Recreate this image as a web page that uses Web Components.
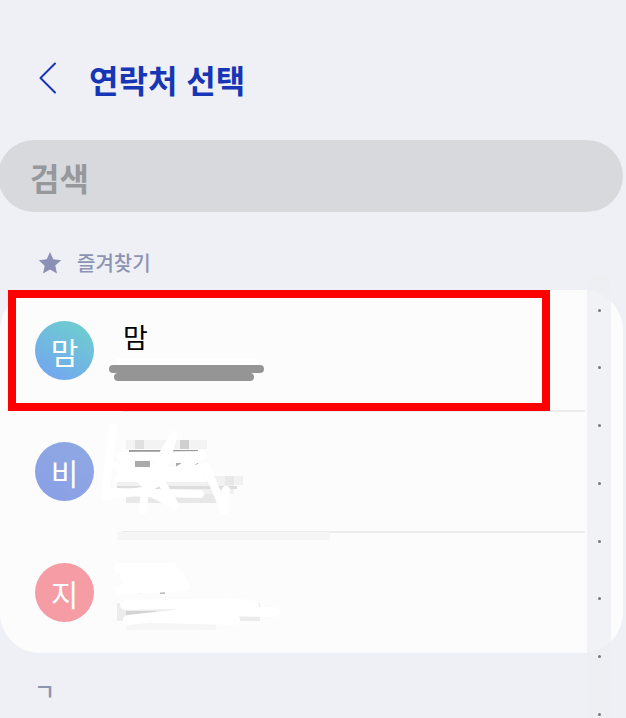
<!DOCTYPE html>
<html lang="ko">
<head>
<meta charset="utf-8">
<title>연락처 선택</title>
<style>
  html, body { margin: 0; padding: 0; height: 718px; overflow: hidden; background: #eff0f6; }
  body { font-family: "Noto Sans CJK KR", "Noto Sans", sans-serif; }
</style>
</head>
<body>
<picker-page>
  <picker-header>연락처 선택</picker-header>
  <search-pill>검색</search-pill>
  <group-label star>즐겨찾기</group-label>
  <contact-card>
    <contact-row initial="맘" tone="blue" name="맘"></contact-row>
    <contact-row initial="비" tone="violet" divider></contact-row>
    <contact-row initial="지" tone="pink" divider></contact-row>
  </contact-card>
  <group-label class="letter">ㄱ</group-label>
  <contact-card></contact-card>
  <index-rail></index-rail>
  <edit-marks></edit-marks>
</picker-page>

<script>
const FONT = '"Noto Sans CJK KR", "Noto Sans", sans-serif';

class PickerPage extends HTMLElement {
  constructor() {
    super();
    this.attachShadow({ mode: 'open' }).innerHTML = `
      <style>
        :host { display: flex; flex-direction: column; position: relative; width: 626px; height: 718px; overflow: hidden; }
      </style>
      <slot></slot>`;
  }
}

class PickerHeader extends HTMLElement {
  constructor() {
    super();
    this.attachShadow({ mode: 'open' }).innerHTML = `
      <style>
        :host { display: flex; align-items: center; height: 140px; padding: 16px 0 0 38px; box-sizing: border-box; color: #1736b5; font: 700 32px/44px ${FONT}; flex: none; }
        svg { width: 20px; height: 32px; margin-right: 31px; flex: none; }
        span { position: relative; top: 1px; }
      </style>
      <svg viewBox="0 0 20 32" fill="none" stroke="#1736b5" stroke-width="2" stroke-linecap="round" stroke-linejoin="round"><path d="M17 1.5 2.5 16 17 30.5"/></svg>
      <span><slot></slot></span>`;
  }
}

class SearchPill extends HTMLElement {
  constructor() {
    super();
    this.attachShadow({ mode: 'open' }).innerHTML = `
      <style>
        :host { display: flex; align-items: center; width: 625px; margin-left: -2px; height: 72px; border-radius: 36px; background: #d8d9dd; padding: 2px 0 0 32px; box-sizing: border-box; color: #97989c; font: 700 32px/40px ${FONT}; flex: none; }
      </style>
      <slot></slot>`;
  }
}

class GroupLabel extends HTMLElement {
  constructor() {
    super();
    const star = this.hasAttribute('star');
    this.attachShadow({ mode: 'open' }).innerHTML = `
      <style>
        :host { display: flex; align-items: center; height: 78px; padding: 24px 0 0 38px; box-sizing: border-box; color: #8d93b3; font: 500 20px/26px ${FONT}; flex: none; }
        :host(.letter) { height: 63px; padding: 11px 0 0 34px; font-size: 23px; }
        svg { width: 24px; height: 24px; margin-right: 15px; }
      </style>
      ${star ? '<svg viewBox="0 0 24 24" fill="#8a91b5"><path d="M12 1l3.3 7.3 7.9.9-5.9 5.4 1.7 7.9L12 18.6l-7 4 1.7-7.9L.8 9.2l7.9-.9z"/></svg>' : ''}
      <slot></slot>`;
  }
}

class ContactCard extends HTMLElement {
  constructor() {
    super();
    this.attachShadow({ mode: 'open' }).innerHTML = `
      <style>
        :host { display: flex; flex-direction: column; width: 623px; background: #fcfcfc; border-radius: 40px; flex: none; }
      </style>
      <slot></slot>`;
  }
}

class ContactRow extends HTMLElement {
  constructor() {
    super();
    const tones = {
      blue: 'linear-gradient(30deg, #72a9ee 15%, #6ecbd0 85%)',
      violet: 'linear-gradient(30deg, #8a9fe6, #8ea9e2)',
      pink: '#f59ca4',
    };
    const bg = tones[this.getAttribute('tone')];
    const divider = this.hasAttribute('divider');
    this.attachShadow({ mode: 'open' }).innerHTML = `
      <style>
        :host { display: flex; align-items: center; height: 121px; box-sizing: border-box; padding-left: 35px; position: relative; }
        .avatar { width: 59px; height: 59px; border-radius: 50%; background: ${bg}; color: #fff; display: flex; align-items: center; justify-content: center; font: 400 30px/36px ${FONT}; flex: none; }
        .name { margin-left: 29px; margin-top: -27px; color: #000; font: 400 27px/34px ${FONT}; }
        .rule { position: absolute; left: 122px; width: 463px; top: -1px; height: 2px; background: #ececec; }
      </style>
      ${divider ? '<div class="rule"></div>' : ''}
      <div class="avatar">${this.getAttribute('initial')}</div>
      <div class="name">${this.getAttribute('name') || ''}</div>`;
  }
}

class IndexRail extends HTMLElement {
  constructor() {
    super();
    let dots = '';
    for (let i = 0; i < 8; i += 1) dots += '<i></i>';
    this.attachShadow({ mode: 'open' }).innerHTML = `
      <style>
        :host { position: absolute; left: 587px; top: 275px; width: 24px; height: 443px; border-radius: 12px 12px 0 0; background: rgba(238,239,243,.8); display: flex; flex-direction: column; align-items: center; gap: 54.8px; padding-top: 33.5px; box-sizing: border-box; }
        i { width: 3px; height: 3px; border-radius: 50%; background: #77777f; flex: none; }
      </style>
      ${dots}`;
  }
}

// red box, grey bars, censored scribbles and mosaic drawn on top of the screenshot
class EditMarks extends HTMLElement {
  constructor() {
    super();
    const mosaic = [
      [126, 440, 81, 9, '#f3f3f3'], [135, 440, 9, 9, '#e0e0e0'], [180, 440, 9, 9, '#cfcfcf'],
      [117, 476, 126, 9, '#f1f1f1'], [225, 476, 9, 18, '#e8e8e8'],
      [117, 485, 117, 9, '#f0f0f0'], [126, 494, 100, 9, '#e8e8e8'],
      [129, 450, 69, 2, '#999'], [135, 461, 15, 6, '#aaa'], [176, 463, 22, 5, '#aaa'], [117, 486, 120, 3, '#ddd'],
      [117, 532, 213, 8, '#f6f6f6'],
      [117, 603, 143, 18, '#ececec'], [126, 611, 30, 9, '#d4d4d4'], [225, 603, 30, 9, '#dedede'], [126, 621, 90, 9, '#f6f6f6'],
      [136, 571, 4, 2, '#aaa'], [165, 567, 6, 2, '#aaa'], [135, 592, 6, 2, '#bbb'], [160, 592, 5, 2, '#bbb'],
    ].map(([x, y, w, h, f]) => `<rect x="${x}" y="${y}" width="${w}" height="${h}" fill="${f}"/>`).join('');
    this.attachShadow({ mode: 'open' }).innerHTML = `
      <style>
        :host { position: absolute; left: 0; top: 0; width: 626px; height: 718px; pointer-events: none; }
        svg { display: block; }
      </style>
      <svg width="626" height="718" viewBox="0 0 626 718" fill="none">
        ${mosaic}
        <rect x="117" y="358" width="141" height="8" rx="3" fill="#fff"/>
        <rect x="109" y="365" width="155" height="8" rx="4" fill="#959595"/>
        <rect x="114" y="373" width="140" height="8" rx="4" fill="#959595"/>
        <g stroke="#fff" stroke-width="8" stroke-linecap="round" stroke-linejoin="round">
          <path d="M113 427 L105 496 L150 490 L120 456 L203 455 L145 490 L175 505 L154 470 L174 435 L160 478 L206 466 L224 510 L226 490"/>
          <path d="M115 465 L125 473 L200 470 M118 478 L205 478 M113 492 L200 494 M143 510 L145 490"/>
        </g>
        <g stroke="#fff" stroke-width="10" stroke-linecap="round" stroke-linejoin="round">
          <path d="M118 568 L172 568 L185 586 L120 590 L165 576 L125 578 M125 574 L180 578"/>
          <path d="M125 605 L235 603 L254 606 M128 620 L210 611 L275 612 M155 618 L235 620 L180 609"/>
        </g>
        <rect x="12" y="294" width="534" height="113" stroke="#f00" stroke-width="8"/>
      </svg>`;
  }
}

customElements.define('picker-page', PickerPage);
customElements.define('picker-header', PickerHeader);
customElements.define('search-pill', SearchPill);
customElements.define('group-label', GroupLabel);
customElements.define('contact-card', ContactCard);
customElements.define('contact-row', ContactRow);
customElements.define('index-rail', IndexRail);
customElements.define('edit-marks', EditMarks);
</script>
</body>
</html>
